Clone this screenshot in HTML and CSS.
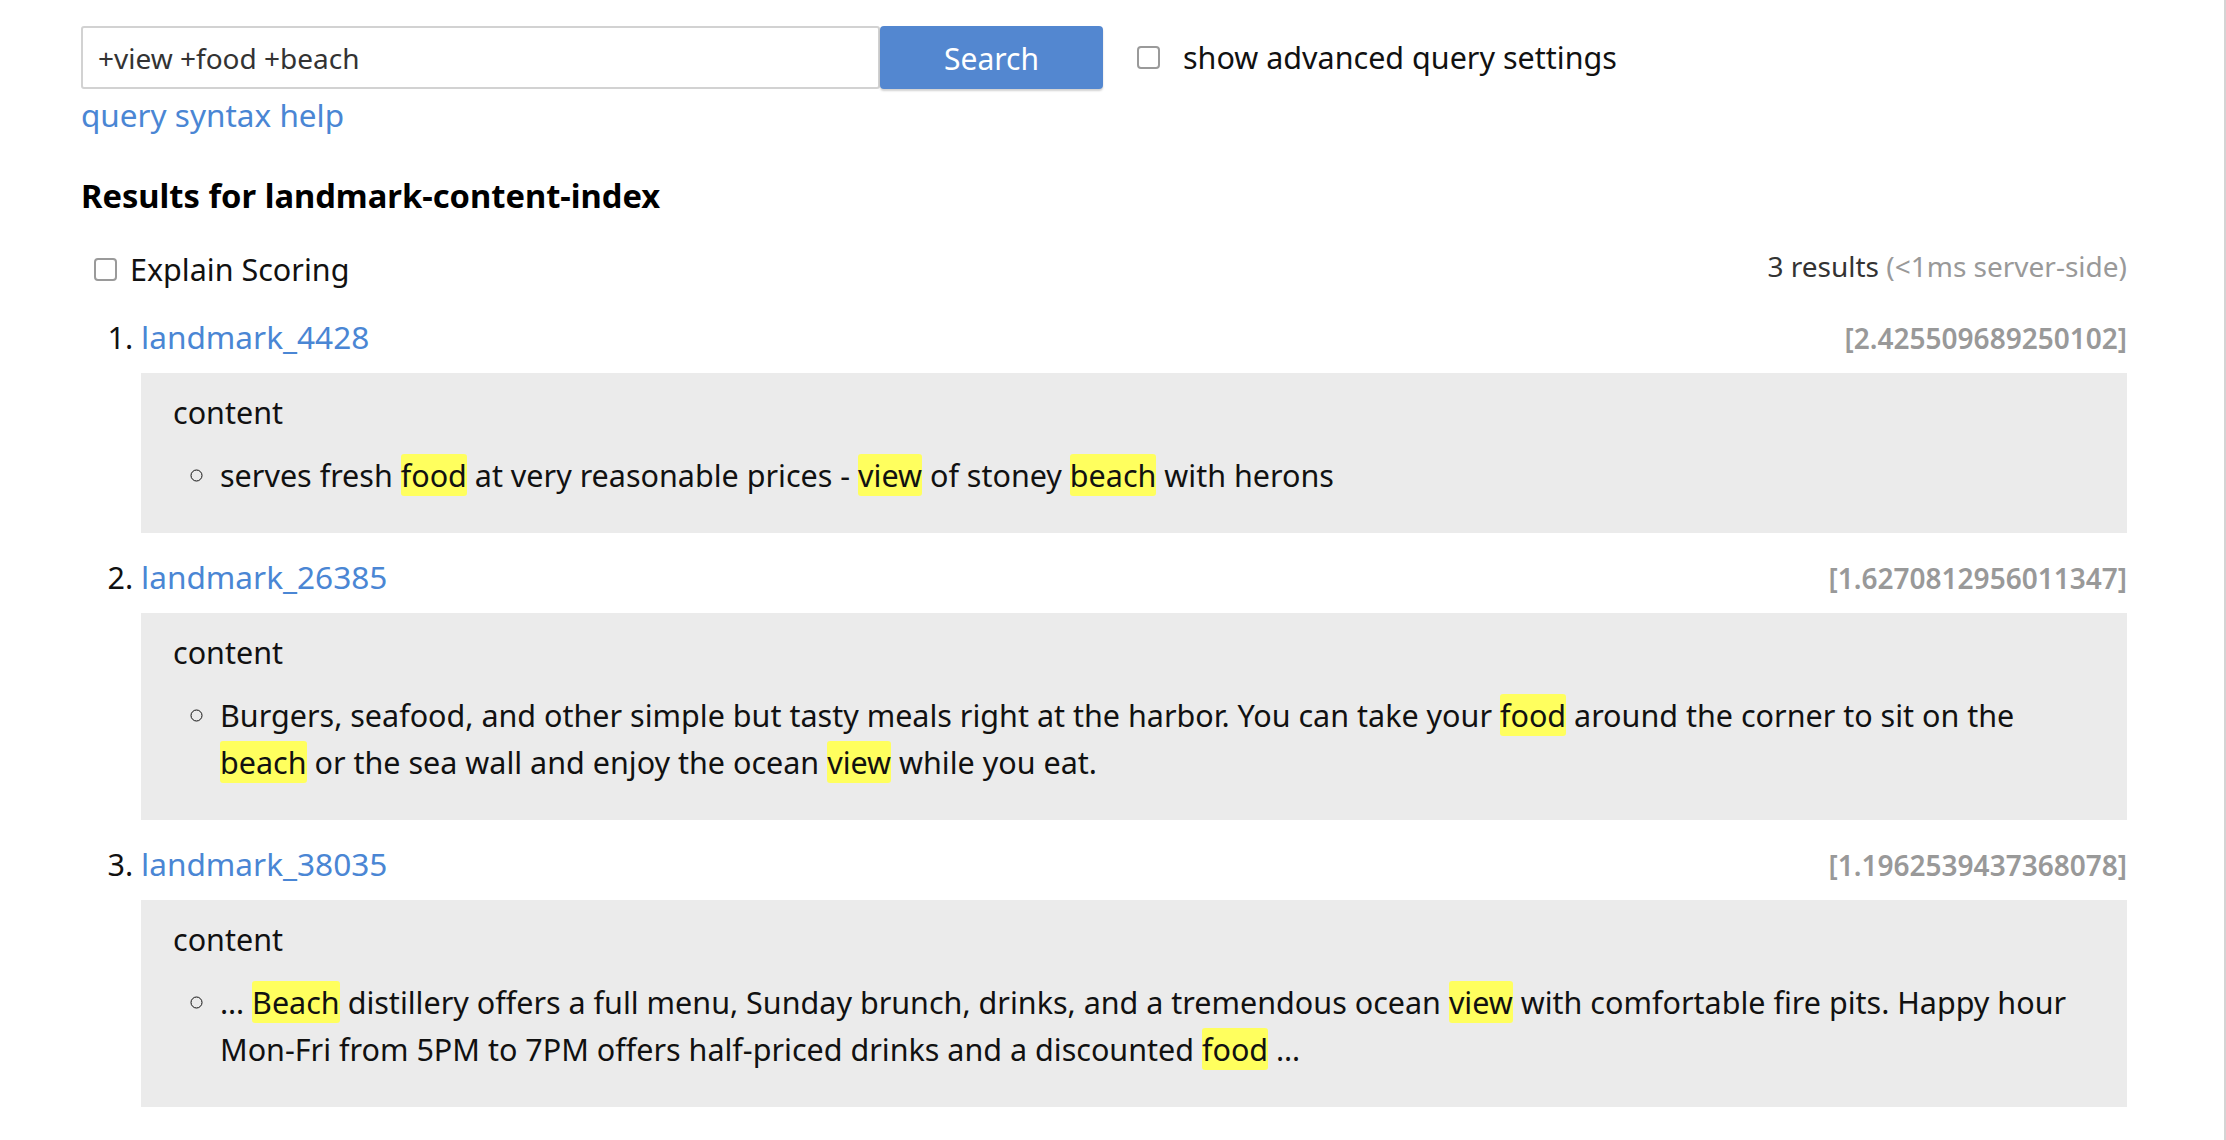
FILE: index.html
```html
<!DOCTYPE html>
<html lang="en">
<head>
<meta charset="utf-8">
<title>Search</title>
<link rel="stylesheet" href="styles.css">
</head>
<body>
<div class="page">
  <form class="search-row">
    <input class="query" type="text" value="+view +food +beach">
    <button class="search-btn" type="button">Search</button>
    <label class="adv">
      <span class="box"></span>
      <span>show advanced query settings</span>
    </label>
  </form>
  <a class="help" href="#">query syntax help</a>

  <h2 class="title">Results for landmark-content-index</h2>

  <div class="meta-row">
    <label class="explain"><span class="box"></span><span>Explain Scoring</span></label>
    <div class="count">3 results <span class="muted">(&lt;1ms server-side)</span></div>
  </div>

  <ol class="results">
    <li class="result">
      <div class="result-head"><a href="#">landmark_4428</a><span class="score">[2.425509689250102]</span></div>
      <div class="fields">
        <div class="field-name">content</div>
        <ul class="frags">
          <li>serves fresh <mark>food</mark> at very reasonable prices - <mark>view</mark> of stoney <mark>beach</mark> with herons</li>
        </ul>
      </div>
    </li>
    <li class="result">
      <div class="result-head"><a href="#">landmark_26385</a><span class="score">[1.6270812956011347]</span></div>
      <div class="fields">
        <div class="field-name">content</div>
        <ul class="frags">
          <li>Burgers, seafood, and other simple but tasty meals right at the harbor. You can take your <mark>food</mark> around the corner to sit on the <mark>beach</mark> or the sea wall and enjoy the ocean <mark>view</mark> while you eat.</li>
        </ul>
      </div>
    </li>
    <li class="result">
      <div class="result-head"><a href="#">landmark_38035</a><span class="score">[1.1962539437368078]</span></div>
      <div class="fields">
        <div class="field-name">content</div>
        <ul class="frags">
          <li>… <mark>Beach</mark> distillery offers a full menu, Sunday brunch, drinks, and a tremendous ocean <mark>view</mark> with comfortable fire pits. Happy hour Mon-Fri from 5PM to 7PM offers half-priced drinks and a discounted <mark>food</mark> …</li>
        </ul>
      </div>
    </li>
  </ol>
</div>
</body>
</html>
```

FILE: styles.css
```css
html, body {
  margin: 0;
  padding: 0;
  background: #fff;
}
body {
  font-family: "Noto Sans", "Open Sans", sans-serif;
  font-size: 30.5px;
  line-height: 47px;
  color: #111;
}
.page {
  box-sizing: border-box;
  width: 2226px;
  min-height: 1140px;
  padding: 26px 97px 0 81px;
  border-right: 2px solid #d4d4d4;
}
.search-row {
  display: flex;
  align-items: center;
  margin: 0;
}
.query {
  box-sizing: border-box;
  width: 799px;
  height: 63px;
  border: 2px solid #d2d2d2;
  border-radius: 3px;
  padding: 0 15px;
  font-family: inherit;
  font-size: 28px;
  color: #333;
  outline: none;
}
.search-btn {
  box-sizing: border-box;
  width: 223px;
  height: 63px;
  border: none;
  border-radius: 4px;
  background: #5387d0;
  color: #fff;
  font-family: inherit;
  font-size: 30px;
  padding-top: 2px;
  box-shadow: 0 2px 2px rgba(0, 0, 0, 0.18);
}
.adv {
  display: flex;
  align-items: center;
  margin-left: 34px;
}
.box {
  box-sizing: border-box;
  display: inline-block;
  width: 23px;
  height: 23px;
  border: 2px solid #9a9a9a;
  border-radius: 4px;
  background: #fff;
  flex: none;
}
.adv .box {
  margin-right: 23px;
}
.help {
  display: inline-block;
  margin-top: 2px;
  color: #4a86d4;
  text-decoration: none;
  font-size: 31.5px;
}
.title {
  margin: 33px 0 0;
  font-size: 32.7px;
  line-height: 47px;
  font-weight: 700;
  color: #000;
}
.meta-row {
  display: flex;
  justify-content: space-between;
  align-items: center;
  margin-top: 27px;
}
.explain {
  display: flex;
  align-items: center;
  padding-left: 13px;
}
.explain .box {
  margin-right: 13px;
}
.count {
  font-size: 28px;
  color: #333;
  margin-top: -6px;
}
.muted {
  color: #999;
}
.results {
  margin: 20px 0 0;
  padding: 0 0 0 60px;
}
.result {
  margin-bottom: 20px;
}
.result-head {
  display: flex;
  justify-content: space-between;
  align-items: baseline;
}
.result-head a {
  color: #4a86d4;
  text-decoration: none;
  font-size: 31.6px;
}
.score {
  color: #999;
  font-size: 28px;
  font-weight: 600;
}
.fields {
  margin-top: 11px;
  background: #ebebeb;
  padding: 16px 32px 18px;
}
.frags {
  margin: 16px 0;
  padding-left: 47px;
  list-style: circle;
}
mark {
  background: #ffff5e;
  color: #111;
  border-radius: 3px;
}
```
